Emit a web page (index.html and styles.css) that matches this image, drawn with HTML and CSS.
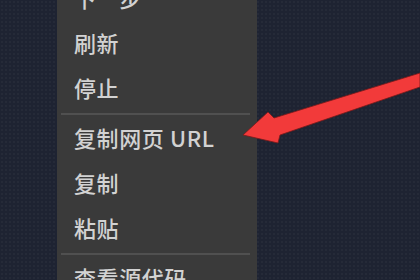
FILE: index.html
```html
<!DOCTYPE html>
<html lang="zh-CN">
<head>
<meta charset="utf-8">
<link rel="stylesheet" href="styles.css">
</head>
<body>
<div class="stage">
  <ul class="menu">
    <li class="item">下一步</li>
    <li class="item">刷新</li>
    <li class="item">停止</li>
    <li class="sep"></li>
    <li class="item">复制网页 URL</li>
    <li class="item">复制</li>
    <li class="item">粘贴</li>
    <li class="sep"></li>
    <li class="item">查看源代码</li>
  </ul>
  <svg class="arrow" width="420" height="280" viewBox="0 0 420 280">
    <polygon points="243,135 268,112 274,118 420,73 420,87 280,135 278,143" fill="#f23a3a" stroke="#7a1a1a" stroke-width="0.8" stroke-linejoin="round"/>
  </svg>
</div>
</body>
</html>
```
FILE: styles.css
```css
html, body {
  margin: 0;
  padding: 0;
  background: #1e2332;
  overflow: hidden;
}
.stage {
  position: relative;
  width: 420px;
  height: 280px;
  overflow: hidden;
  background-color: #1e2332;
  background-image: radial-gradient(rgba(255,255,255,0.03) 1px, transparent 1px);
  background-size: 4px 4px;
}
.menu {
  list-style: none;
  margin: -24px 0 0 57px;
  padding: 0;
  width: 200px;
  background: #3a3a3a;
  font-family: "Noto Sans CJK SC", "Noto Sans", "Liberation Sans", sans-serif;
  font-size: 22px;
  font-weight: 500;
  letter-spacing: 0.6px;
  color: #d2d2d2;
}
.item {
  height: 45px;
  line-height: 43px;
  padding-left: 17px;
  white-space: nowrap;
}
.sep {
  height: 5px;
  display: flex;
  align-items: center;
  padding: 0 7px 0 4px;
}
.sep::before {
  content: "";
  flex: 1;
  height: 2px;
  background: #505050;
}
.arrow {
  position: absolute;
  left: 0;
  top: 0;
}
```
